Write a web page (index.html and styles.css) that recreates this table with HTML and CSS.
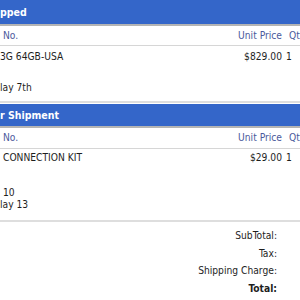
FILE: index.html
```html
<!DOCTYPE html>
<html lang="en">
<head>
    <meta charset="UTF-8">
    <title>Order Status</title>
    <link rel="stylesheet" href="styles.css">
</head>
<body>

    <div class="section">
        <div class="bar first">pped</div>
        <div class="row head">
            <div class="cell indent">No.</div>
            <div class="cell price">Unit Price</div>
            <div class="cell qty">Qty</div>
        </div>
        <div class="row item item-one">
            <div class="cell">
                <div class="line">3G 64GB-USA</div>
                <div class="line late">lay 7th</div>
            </div>
            <div class="cell price">$829.00</div>
            <div class="cell">1</div>
        </div>
    </div>

    <div class="section">
        <div class="bar">r Shipment</div>
        <div class="row head">
            <div class="cell indent">No.</div>
            <div class="cell price">Unit Price</div>
            <div class="cell qty">Qty</div>
        </div>
        <div class="row item item-two">
            <div class="cell">
                <div class="line indent">CONNECTION KIT</div>
                <div class="line later indent">10</div>
                <div class="line">lay 13</div>
            </div>
            <div class="cell price">$29.00</div>
            <div class="cell">1</div>
        </div>
    </div>

    <div class="totals">
        <div class="total-row">SubTotal:</div>
        <div class="total-row">Tax:</div>
        <div class="total-row">Shipping Charge:</div>
        <div class="total-row grand">Total:</div>
    </div>

</body>
</html>
```

FILE: styles.css
```css
body {
    margin: 0;
    font-family: 'DejaVu Sans Condensed', 'DejaVu Sans', Verdana, sans-serif;
    font-size: 10.2px;
    color: #1e1e1e;
    background-color: #fff;
    overflow: hidden;
}
.bar {
    height: 22px;
    line-height: 22px;
    margin-top: 1px;
    background-color: #3466c9;
    border-bottom: 2px solid #b4b4b4;
    color: #fff;
    font-weight: bold;
    font-size: 10.5px;
    white-space: nowrap;
}
.bar.first {
    height: 24px;
    line-height: 24px;
    margin-top: 0;
}
.row {
    display: grid;
    grid-template-columns: 1fr 70px 14px;
    column-gap: 4px;
    white-space: nowrap;
}
.head {
    height: 19px;
    align-items: center;
    border-bottom: 1px solid #d6d6d6;
    color: #4b5a9c;
}
.section + .section .head {
    height: 20px;
}
.item {
    border-bottom: 2px solid #dedede;
}
.item-one {
    padding: 5px 0 7px;
}
.item-two {
    padding: 3px 0 9px;
}
.line {
    line-height: 12px;
}
.late {
    margin-top: 19px;
}
.later {
    margin-top: 23px;
}
.cell {
    line-height: 12px;
}
.indent {
    padding-left: 3px;
}
.price {
    text-align: right;
}
.qty {
    padding-left: 3px;
}
.totals {
    padding: 5px 23px 0 0;
    text-align: right;
}
.total-row {
    line-height: 17.5px;
}
.grand {
    font-weight: bold;
}
```
